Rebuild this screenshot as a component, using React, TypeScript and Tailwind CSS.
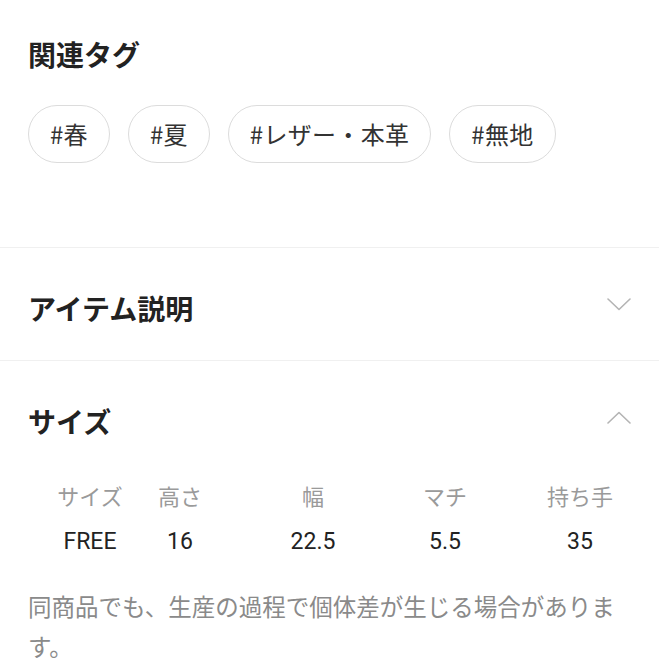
import React from 'react';

const tags = ['#春', '#夏', '#レザー・本革', '#無地'];

const sizeHeaders = ['サイズ', '高さ', '幅', 'マチ', '持ち手'];
const sizeValues = ['FREE', '16', '22.5', '5.5', '35'];

const Chevron = ({ up = false }: { up?: boolean }) => (
  <svg width="24" height="13" viewBox="0 0 24 13" fill="none" className="shrink-0">
    <polyline
      points={up ? '1,12 12,1.5 23,12' : '1,1 12,11.5 23,1'}
      stroke="#b4b4b4"
      strokeWidth="1.6"
      strokeLinecap="round"
      strokeLinejoin="round"
    />
  </svg>
);

const App = () => {
  return (
    <div className="w-full bg-white overflow-hidden font-['Noto_Sans_CJK_JP',sans-serif] text-[#222]">
      {/* Related tags */}
      <section className="px-[28px] pt-[34px] pb-[84px]">
        <h2 className="text-[28px] leading-[40px] font-bold">関連タグ</h2>
        <div className="mt-[31px] flex flex-wrap gap-[18px]">
          {tags.map((tag) => (
            <span
              key={tag}
              className="h-[58px] px-[21px] flex items-center rounded-full border border-[#dcdcdc] text-[24px] tracking-[0.3px] text-[#333]"
            >
              {tag}
            </span>
          ))}
        </div>
      </section>

      {/* Item description (closed) */}
      <section className="border-t border-[#f0f0f0]">
        <div className="h-[112px] px-[28px] flex items-center justify-between">
          <h3 className="pt-[8px] text-[28px] leading-[40px] font-bold">アイテム説明</h3>
          <Chevron />
        </div>
      </section>

      {/* Size (open) */}
      <section className="border-t border-[#f0f0f0]">
        <div className="h-[112px] px-[28px] flex items-center justify-between">
          <h3 className="pt-[8px] text-[28px] leading-[40px] font-bold">サイズ</h3>
          <Chevron up />
        </div>

        <div className="mt-[6px] pl-[45px] grid grid-cols-[90px_90px_176px_88px_182px] gap-y-[15px] leading-[32px]">
          {sizeHeaders.map((h) => (
            <div key={h} className="text-center text-[22px] text-[#9a9a9a]">
              {h}
            </div>
          ))}
          {sizeValues.map((v) => (
            <div key={v} className="text-center text-[23px] text-[#222] font-['Roboto','Noto_Sans_CJK_JP',sans-serif]">
              {v}
            </div>
          ))}
        </div>

        <p className="mt-[28px] px-[28px] text-[23.5px] leading-[40px] text-[#8a8a8a]">
          同商品でも、生産の過程で個体差が生じる場合があります。
        </p>
      </section>
    </div>
  );
};

export default App;
